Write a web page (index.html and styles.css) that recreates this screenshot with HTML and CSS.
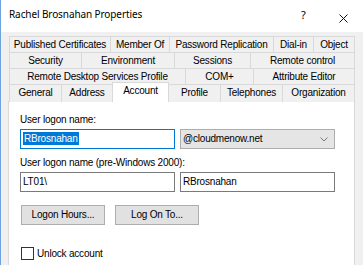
FILE: index.html
```html
<!DOCTYPE html>
<html lang="en">

<head>
    <meta charset="UTF-8">
    <title>Rachel Brosnahan Properties</title>
    <link rel="stylesheet" href="styles.css">
</head>

<body>
    <div class="window">
        <!-- title bar -->
        <div class="titlebar">
            <span class="title">Rachel Brosnahan Properties</span>
            <span class="help">?</span>
            <span class="close">
                <svg width="9" height="9" viewBox="0 0 9 9">
                    <path d="M0.5 0.5 L8.5 8.5 M8.5 0.5 L0.5 8.5" stroke="#111" stroke-width="1" fill="none" />
                </svg>
            </span>
        </div>

        <div class="client">
            <!-- tabs, four rows -->
            <div class="tabs">
                <div class="tab-row row1">
                    <div class="tab">Published Certificates</div>
                    <div class="tab">Member Of</div>
                    <div class="tab">Password Replication</div>
                    <div class="tab">Dial-in</div>
                    <div class="tab">Object</div>
                </div>
                <div class="tab-row row2">
                    <div class="tab">Security</div>
                    <div class="tab">Environment</div>
                    <div class="tab">Sessions</div>
                    <div class="tab">Remote control</div>
                </div>
                <div class="tab-row row3">
                    <div class="tab">Remote Desktop Services Profile</div>
                    <div class="tab">COM+</div>
                    <div class="tab">Attribute Editor</div>
                </div>
                <div class="tab-row row4">
                    <div class="tab">General</div>
                    <div class="tab">Address</div>
                    <div class="tab active">Account</div>
                    <div class="tab">Profile</div>
                    <div class="tab">Telephones</div>
                    <div class="tab">Organization</div>
                </div>
            </div>

            <!-- account page -->
            <div class="panel">
                <div class="field-label first">User logon name:</div>
                <div class="field-row">
                    <div class="textbox focused"><span class="selected">RBrosnahan</span></div>
                    <div class="combo">
                        <span>@cloudmenow.net</span>
                        <svg width="8" height="5" viewBox="0 0 8 5">
                            <path d="M0.5 0.5 L4 4 L7.5 0.5" stroke="#777" stroke-width="1" fill="none" />
                        </svg>
                    </div>
                </div>

                <div class="field-label">User logon name (pre-Windows 2000):</div>
                <div class="field-row">
                    <div class="textbox">LT01\</div>
                    <div class="textbox">RBrosnahan</div>
                </div>

                <div class="buttons">
                    <div class="button">Logon Hours...</div>
                    <div class="button">Log On To...</div>
                </div>

                <div class="check">
                    <span class="box"></span>
                    <span>Unlock account</span>
                </div>
            </div>
        </div>
    </div>
</body>

</html>
```

FILE: styles.css
```css
* {
    box-sizing: border-box;
}

body {
    margin: 0;
    background: #f0f0f0;
    font-family: "Liberation Sans", Arial, sans-serif;
    font-size: 10px;
    letter-spacing: -0.2px;
    color: #000;
}

.window {
    width: 363px;
    height: 265px;
    overflow: hidden;
    border-left: 1px solid #6fa3dd;
}

.titlebar {
    height: 32px;
    background: #fff;
    display: flex;
    align-items: flex-start;
    padding: 7px 0 0 8px;
    font-family: "Noto Sans", sans-serif;
    font-size: 10px;
    letter-spacing: -0.1px;
}

.title {
    flex: 1;
}

.help {
    width: 38px;
    font-size: 11px;
}

.close {
    width: 24px;
    padding-top: 5px;
}

.client {
    padding: 4px 0 0 8px;
}

/* tabs */

.tabs {
    width: 346px;
}

.tab-row {
    display: grid;
    height: 16px;
}

.row1 {
    grid-template-columns: 101px 59px 104px 40px 1fr;
}

.row2 {
    grid-template-columns: 72px 93px 76px 1fr;
}

.row3 {
    grid-template-columns: 176px 68px 1fr;
}

.row4 {
    height: 17px;
    grid-template-columns: 52px 51px 57px 51px 62px 1fr;
}

.tab {
    border: 1px solid #d9d9d9;
    border-right: none;
    border-bottom: none;
    text-align: center;
    line-height: 15px;
    white-space: nowrap;
    background: #f0f0f0;
}

.tab:last-child {
    border-right: 1px solid #d9d9d9;
}

.tab.active {
    background: #fff;
    margin-top: -2px;
    height: 20px;
    line-height: 16px;
    position: relative;
    z-index: 1;
    border-right: 1px solid #d9d9d9;
}

.tab.active + .tab {
    border-left: none;
}

/* panel */

.panel {
    width: 347px;
    height: 180px;
    background: #fff;
    border: 1px solid #d9d9d9;
    padding: 0 0 0 11px;
    margin-left: -1px;
}

.field-label {
    margin-top: 8px;
    height: 12px;
    line-height: 12px;
}

.field-label.first {
    margin-top: 12px;
}

.field-row {
    display: flex;
    gap: 5px;
    margin-top: 3px;
}

.textbox,
.combo {
    width: 155px;
    height: 20px;
    border: 1px solid #7a7a7a;
    line-height: 18px;
    padding-left: 2px;
    white-space: nowrap;
}

.textbox.focused {
    border-color: #0078d7;
}

.selected {
    background: #0078d7;
    color: #fff;
    padding: 1px 1px;
}

.combo {
    background: #e5e5e5;
    border-color: #adadad;
    display: flex;
    justify-content: space-between;
    align-items: center;
    padding-right: 6px;
}

.buttons {
    display: flex;
    gap: 10px;
    margin-top: 13px;
    padding-left: 1px;
}

.button {
    width: 84px;
    height: 20px;
    background: #e1e1e1;
    border: 1px solid #adadad;
    text-align: center;
    line-height: 18px;
}

.check {
    display: flex;
    align-items: center;
    gap: 3px;
    margin-top: 22px;
    padding-left: 1px;
}

.box {
    width: 13px;
    height: 13px;
    border: 1px solid #333;
    background: #fff;
}
```
